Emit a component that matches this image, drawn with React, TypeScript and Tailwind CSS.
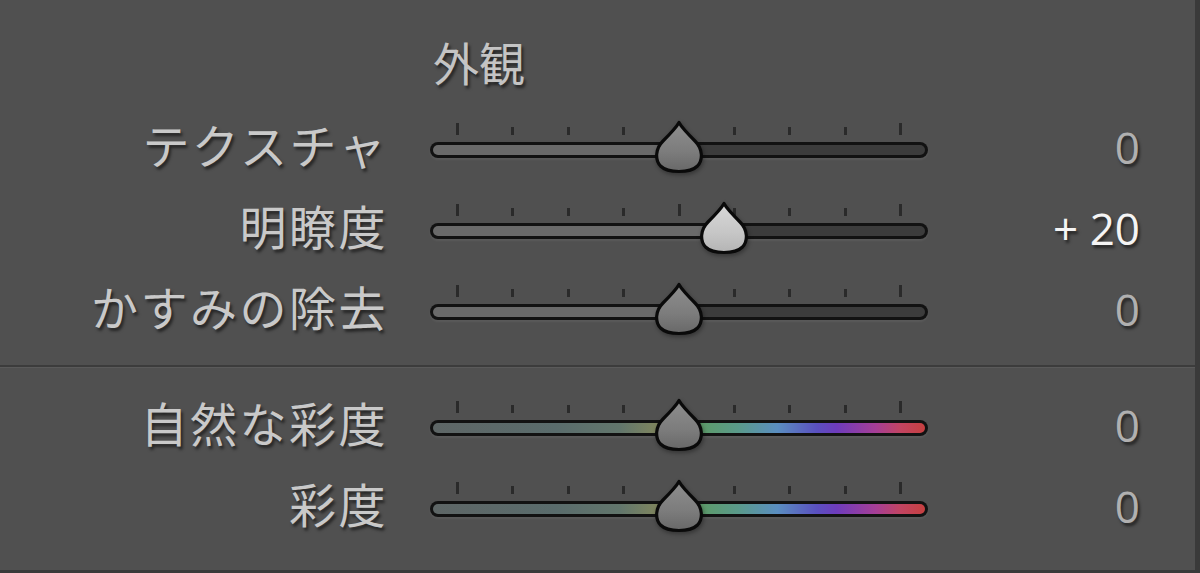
import React from "react";

type Row = { label: string; value: number; active?: boolean; color?: boolean };

const top: Row[] = [
  { label: "テクスチャ", value: 0 },
  { label: "明瞭度", value: 20, active: true },
  { label: "かすみの除去", value: 0 },
];
const bottom: Row[] = [
  { label: "自然な彩度", value: 0, color: true },
  { label: "彩度", value: 0, color: true },
];

const ticks = [0, 1, 2, 3, 4, 5, 6, 7, 8];
const shadow = "[text-shadow:2px_3px_3px_rgba(0,0,0,0.55)]";
const jp = "font-['Noto_Sans_CJK_JP','Noto_Sans',sans-serif]";

function Thumb({ active }: { active?: boolean }) {
  const id = active ? "thumbA" : "thumbN";
  return (
    <svg width="52" height="54" viewBox="0 0 52 54" className="drop-shadow-[1px_2px_2px_rgba(0,0,0,0.35)]">
      <defs>
        <linearGradient id={id} x1="0" y1="0" x2="0" y2="1">
          <stop offset="0" stopColor={active ? "#d8d8d8" : "#8e8e8e"} />
          <stop offset="0.6" stopColor={active ? "#c6c6c6" : "#7c7c7c"} />
          <stop offset="1" stopColor={active ? "#b4b4b4" : "#686868"} />
        </linearGradient>
      </defs>
      <path
        d="M26 2.5 C29 8 35 14 42 21 C50 29 50 40 44.5 46 C40 50.5 33 51.5 26 51.5 C19 51.5 12 50.5 7.5 46 C2 40 2 29 10 21 C17 14 23 8 26 2.5 Z"
        fill={`url(#${id})`}
        stroke="#0a0a0a"
        strokeWidth="3.2"
        strokeLinejoin="round"
      />
    </svg>
  );
}

function Slider({ row }: { row: Row }) {
  // thumb centre: 249px at 0, ~2.25px per unit
  const pos = 249 + row.value * 2.25;
  return (
    <div className="relative w-[498px] h-[81px]">
      {ticks.map((t) => (
        <div
          key={t}
          className={`absolute w-[3px] bg-[#2a2a2a] ${t === 0 || t === 4 || t === 8 ? "top-[15px] h-[12px]" : "top-[19px] h-[8px]"}`}
          style={{ left: 26 + t * 55.4 }}
        />
      ))}
      <div className="absolute left-0 right-0 top-[34px] h-[16px] rounded-full bg-[#121212] p-[3px] shadow-[0_2px_2px_rgba(255,255,255,0.06)]">
        {row.color ? (
          <div className="h-full w-full rounded-full bg-[linear-gradient(90deg,#5e6666_0%,#5a6c6c_25%,#62766c_38%,#8c8c58_49%,#5e9a5e_52%,#5a9a8a_62%,#5a8ec0_70%,#5a50c0_78%,#6e3cbc_82%,#a63e96_90%,#c24462_95%,#c64040_100%)]" />
        ) : (
          <div className="flex h-full w-full overflow-hidden rounded-full">
            <div className="h-full bg-[#6a6a6a]" style={{ width: pos }} />
            <div className="h-full flex-1 bg-[#3c3c3c]" />
          </div>
        )}
      </div>
      <div className="absolute top-[12px]" style={{ left: pos - 26 }}>
        <Thumb active={row.active} />
      </div>
    </div>
  );
}

function SliderRow({ row }: { row: Row }) {
  return (
    <div className="flex h-[81px] items-center">
      <div className={`w-[388px] -mt-[10px] text-right text-[47px] tracking-[2.5px] leading-none text-[#c9c9c9] ${jp} ${shadow}`}>
        {row.label}
      </div>
      <div className="ml-[42px]">
        <Slider row={row} />
      </div>
      <div
        className={`w-[212px] -mt-[4px] text-right text-[44px] leading-none font-['Open_Sans','Liberation_Sans',sans-serif] ${shadow} ${
          row.active ? "text-[#f4f4f4]" : "text-[#b0b0b0]"
        }`}
      >
        {row.value > 0 ? `+ ${row.value}` : row.value}
      </div>
    </div>
  );
}

export default function App() {
  return (
    <div className="w-[1200px] h-[573px] overflow-hidden bg-[#505050] border-r-[5px] border-b-[3px] border-[#3a3a3a]">
      <div className="pt-[34px]">
        <div className={`h-[54px] pl-[433px] text-[46px] leading-[54px] text-[#c4c4c4] ${jp} ${shadow}`}>外観</div>
      </div>
      <div className="mt-[20px]">
        {top.map((r) => (
          <SliderRow key={r.label} row={r} />
        ))}
      </div>
      <div className="mt-[14px] h-[2px] bg-[#3c3c3c]" />
      <div className="h-[1px] bg-[#5a5a5a]" />
      <div className="mt-[18px]">
        {bottom.map((r) => (
          <SliderRow key={r.label} row={r} />
        ))}
      </div>
    </div>
  );
}
